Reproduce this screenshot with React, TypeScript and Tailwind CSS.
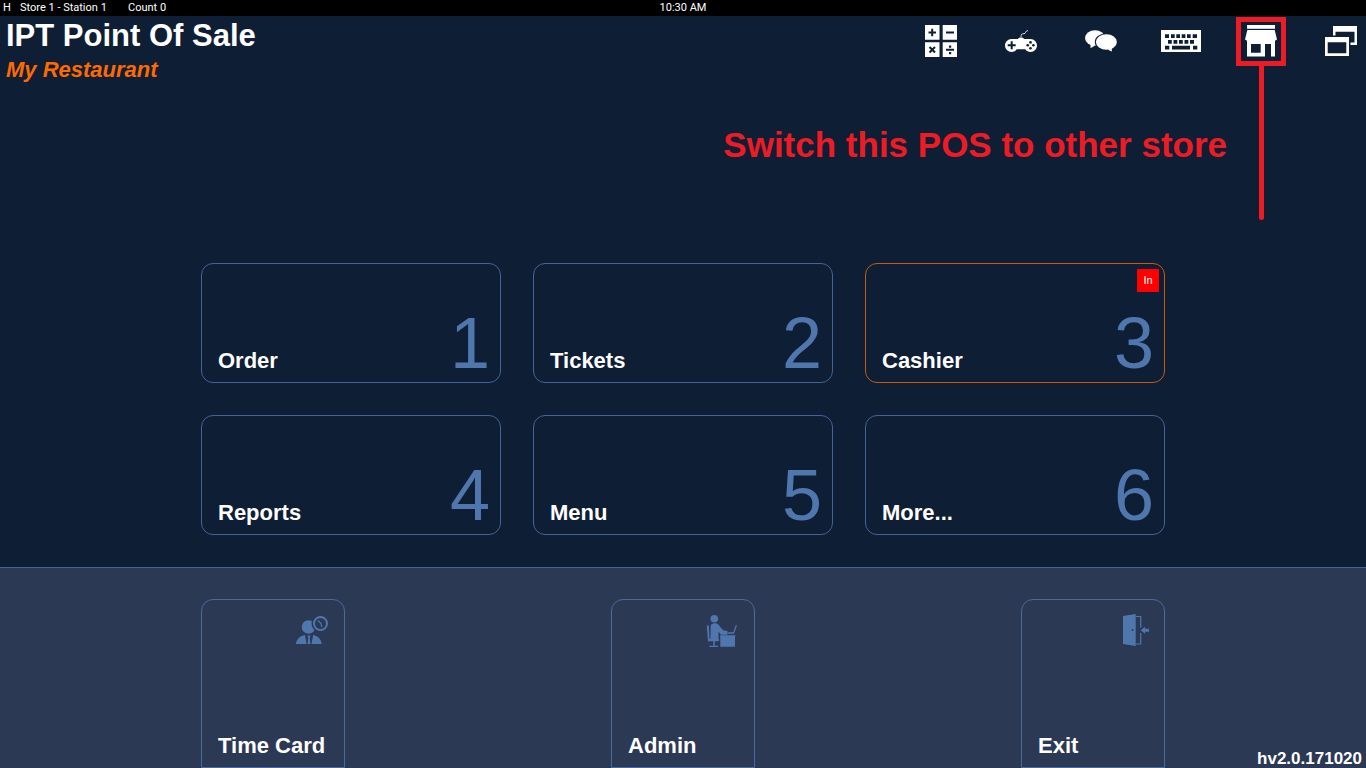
import type { ReactNode } from 'react'

type Tile = { id: number; label: string; badge?: string }

const tiles: Tile[] = [
  { id: 1, label: 'Order' },
  { id: 2, label: 'Tickets' },
  { id: 3, label: 'Cashier', badge: 'In' },
  { id: 4, label: 'Reports' },
  { id: 5, label: 'Menu' },
  { id: 6, label: 'More...' },
]

function CalculatorIcon() {
  return (
    <svg viewBox="0 0 32 32" className="w-8 h-8" aria-hidden="true">
      <path fill="white" d="M0 0h14.500v14.800H0zM17.700 0H32v14.800H17.700zM0 17.200h14.500V32H0zM17.700 17.200H32V32H17.700z" />
      <path
        stroke="#0d1e35"
        strokeWidth="2"
        fill="none"
        d="M3.500 7.500h7.500M7.200 3.700v7.500M21 7.500h8M4.500 22l5.500 5.500M10 22l-5.500 5.500M21 24.800h8"
      />
      <path fill="#0d1e35" d="M24 20.500h2.200v2.200H24zM24 27h2.200v2.200H24z" />
    </svg>
  )
}

function GamepadIcon() {
  return (
    <svg viewBox="0 0 32 32" className="w-8 h-8" aria-hidden="true">
      <path fill="none" stroke="white" strokeWidth="0.8" d="M16 12c0-3 1-3.500 3-3.300s1-3 4-3.200" />
      <path
        fill="white"
        d="M13 14c.3-2 5.700-2 6 0h6.500c3.800 0 6.500 3 6.500 6.500S29.200 27 25.700 27c-2.500 0-4.200-1-5.400-2.800h-8.600C10.500 26 9 27 6.600 27 3 27 0 24 0 20.500S2.800 14 6.500 14z"
      />
      <path stroke="#0d1e35" strokeWidth="2" d="M2.700 20.300h8M6.700 16.300v8" />
      <g fill="#0d1e35">
        <circle cx="25.500" cy="17.400" r="1.300" />
        <circle cx="25.500" cy="23.200" r="1.300" />
        <circle cx="22.700" cy="20.300" r="1.300" />
        <circle cx="28.400" cy="20.300" r="1.300" />
      </g>
    </svg>
  )
}

function ChatIcon() {
  return (
    <svg viewBox="0 0 32 32" className="w-8 h-8" aria-hidden="true">
      <ellipse cx="10" cy="13" rx="10" ry="7.800" fill="white" />
      <path fill="white" d="M4.500 18.500c1.300 1.500 1.300 3 .8 4.500 2-.5 3.500-1.300 4.500-3z" />
      <ellipse cx="21.400" cy="17" rx="11.600" ry="8.800" fill="#0d1e35" />
      <ellipse cx="21.400" cy="17" rx="10.500" ry="7.800" fill="white" />
      <path fill="white" d="M28 22c-1.300 1.500-1.500 3-1 4.500-2-.5-3.500-1.300-4.500-3z" />
    </svg>
  )
}

function KeyboardIcon() {
  return (
    <svg viewBox="0 0 40 22" className="w-10" aria-hidden="true">
      <path fill="white" d="M0 0h40v22H0z" />
      <path
        fill="#0d1e35"
        d="M4 4.300h4v3.700h-4zM10 4.300h3.700v3.700H10zM15.300 4.300h3.700v3.700h-3.700zM20.700 4.300h3.700v3.700h-3.700zM26 4.300h3.700v3.700H26zM31.700 4.300H36v3.700h-4.300zM7 10h3.800v3.800H7zM12.500 10h3.800v3.800h-3.800zM18 10h3.800v3.800H18zM23.500 10h3.800v3.800h-3.800zM29 10h4v3.800h-4zM4 15.700h4.300v3.800H4zM11 15.700h18v3.800H11zM32 15.700h4.300v3.800H32z"
      />
    </svg>
  )
}

function StoreIcon() {
  return (
    <svg viewBox="0 0 32 32" className="w-8 h-8" aria-hidden="true">
      <path fill="white" d="M2 0h28v3.800H2z" />
      <path
        fill="white"
        fillRule="evenodd"
        d="M2.300 5h27.400L32 14.500 30.500 15.500H30V31.500H26V19h-6v12.500H2V15.500H1.500L0 14.500zM6 19v8.700h9.700V19z"
      />
    </svg>
  )
}

function WindowsIcon() {
  return (
    <svg viewBox="0 0 32 32" className="w-8 h-8" aria-hidden="true">
      <g fill="white" fillRule="evenodd">
        <path d="M8 1h24v19h-6.500v-2.500h4V6.700h-19V10.500H8z" />
        <path d="M0 12h24v19H0zM2.700 17.300v11h18.600v-11z" />
      </g>
    </svg>
  )
}

function TimeCardIcon() {
  return (
    <svg viewBox="0 0 32 32" className="w-8 h-8" aria-hidden="true">
      <circle cx="12.500" cy="13" r="6.800" fill="#5077ad" />
      <path fill="#5077ad" d="M0 30c.5-4.500 3.500-8 9-9l1.500 9zM25.700 30c-.5-4.500-3.500-8-8.500-9l-1.700 9z" />
      <path fill="#5077ad" d="M11.500 21.500h3l-.8 2.500.8 6h-3l.8-6z" />
      <circle cx="24.500" cy="9.500" r="9" fill="#2b3955" />
      <circle cx="24.500" cy="9.500" r="6.500" fill="none" stroke="#5077ad" strokeWidth="2" />
      <path fill="none" stroke="#5077ad" strokeWidth="1.200" d="M21.800 6.500l3.200 3 .7 3.700" />
    </svg>
  )
}

function AdminIcon() {
  return (
    <svg viewBox="0 0 32 34" className="w-8 h-[34px]" aria-hidden="true">
      <g fill="#5077ad">
        <circle cx="8.300" cy="4.700" r="3.800" />
        <path d="M4.700 12c0-3.500 6.300-3.500 7.800-1.300l4.500 5.500 4.500.8v3.700h-6.500L12.500 17.500v9.500H4.500z" />
        <path d="M.8 11.500h2l.8 13.500h9.200v2.200H2z" />
        <path d="M7.300 27h1.500v5H7.300zM3.500 31.700h8.500V33H3.500zM14 21.200h15.300v1.200H14zM14.300 22.300h14.700v10.500H14.300z" />
        <path d="M21.800 18.300h5.500l2.400-7.300 1.300.4-3 8.300h-6.200z" />
      </g>
    </svg>
  )
}

function ExitIcon() {
  return (
    <svg viewBox="0 0 34 32" className="w-[34px] h-8 shrink-0" aria-hidden="true">
      <path fill="#5077ad" d="M7 2l12.700-2v32L7 30z" />
      <path fill="none" stroke="#5077ad" strokeWidth="1.200" d="M20 2.500h4.700v11M24.700 19v11H20" />
      <path fill="#5077ad" d="M24.700 16.200l4.300-3.500v2h4v3h-4v2z" />
      <circle cx="16.500" cy="16" r="0.900" fill="#2b3955" />
    </svg>
  )
}

function ToolButton({ label, children }: { label: string; children: ReactNode }) {
  return (
    <button aria-label={label} className="w-10 h-10 flex items-center justify-center">
      {children}
    </button>
  )
}

function MenuTile({ tile }: { tile: Tile }) {
  return (
    <button
      className={`relative h-[120px] flex flex-col justify-end rounded-xl border pl-4 pr-[10px] pb-[3px] ${
        tile.badge ? 'border-[#c65a11]' : 'border-[#456496]'
      }`}
    >
      {tile.badge && (
        <span className="absolute top-[5px] right-[5px] w-[22px] h-[23px] bg-[#ff0000] text-white text-[11px] leading-[23px] text-center">
          {tile.badge}
        </span>
      )}
      <span className="w-full flex items-baseline justify-between">
        <span className="text-[22px] leading-6 font-bold text-white">{tile.label}</span>
        <span className="text-[72px] leading-[72px] text-[#5077ad]">{tile.id}</span>
      </span>
    </button>
  )
}

const actions = [
  { label: 'Time Card', icon: <TimeCardIcon /> },
  { label: 'Admin', icon: <AdminIcon /> },
  { label: 'Exit', icon: <ExitIcon /> },
]

export default function App() {
  return (
    <div className="min-h-screen flex flex-col bg-[#0d1e35] text-white font-['Liberation_Sans',Arial,sans-serif]">
      <div className="h-4 grid grid-cols-[1fr_auto_1fr] items-center bg-black px-[3px] font-['Roboto',sans-serif] text-[11px] leading-4">
        <div className="flex">
          <span className="w-[17px]">H</span>
          <span className="w-[108px]">Store 1 - Station 1</span>
          <span>Count 0</span>
        </div>
        <span>10:30 AM</span>
      </div>

      <header className="flex justify-between pl-[6px] pr-[5px]">
        <div>
          <h1 className="text-[31px] leading-10 font-bold">IPT Point Of Sale</h1>
          <p className="text-[22px] leading-7 font-bold italic text-[#ff6a00]">My Restaurant</p>
        </div>
        <nav className="flex gap-10 pt-[5px]">
          <ToolButton label="Calculator"><CalculatorIcon /></ToolButton>
          <ToolButton label="Games"><GamepadIcon /></ToolButton>
          <ToolButton label="Messages"><ChatIcon /></ToolButton>
          <ToolButton label="Keyboard"><KeyboardIcon /></ToolButton>
          <div className="relative h-10">
            <ToolButton label="Switch store"><StoreIcon /></ToolButton>
            <div className="absolute -top-1 -left-[5px] w-[50px] h-[49px] border-5 border-[#ed1c24] pointer-events-none" />
            <div className="absolute top-[45px] left-[18px] w-[5px] h-[154px] rounded-b-sm bg-[#ed1c24]" />
            <p className="absolute top-[104px] right-[54px] whitespace-nowrap text-[35px] leading-10 font-bold text-[#ed1c24]">
              Switch this POS to other store
            </p>
          </div>
          <ToolButton label="Windows"><WindowsIcon /></ToolButton>
        </nav>
      </header>

      <main className="flex-1 flex flex-col justify-end pb-8">
        <div className="w-full max-w-[964px] mx-auto grid grid-cols-3 gap-8">
          {tiles.map((tile) => (
            <MenuTile key={tile.id} tile={tile} />
          ))}
        </div>
      </main>

      <footer className="grid grid-cols-[1fr_minmax(0,964px)_1fr] border-t border-[#456496] bg-[#2b3955] pt-[31px]">
        <div />
        <div className="flex justify-between">
          {actions.map((action) => (
            <button
              key={action.label}
              className="w-36 h-[169px] flex flex-col justify-between items-start rounded-t-xl border border-[#4a6a9d] px-4 pb-[9px] pt-[14px]"
            >
              <span className="w-8 flex self-end">{action.icon}</span>
              <span className="text-[22px] leading-6 font-bold whitespace-nowrap">{action.label}</span>
            </button>
          ))}
        </div>
        <div className="flex items-end justify-end pr-1">
          <span className="text-[17px] leading-[18px] font-bold">hv2.0.171020</span>
        </div>
      </footer>
    </div>
  )
}
